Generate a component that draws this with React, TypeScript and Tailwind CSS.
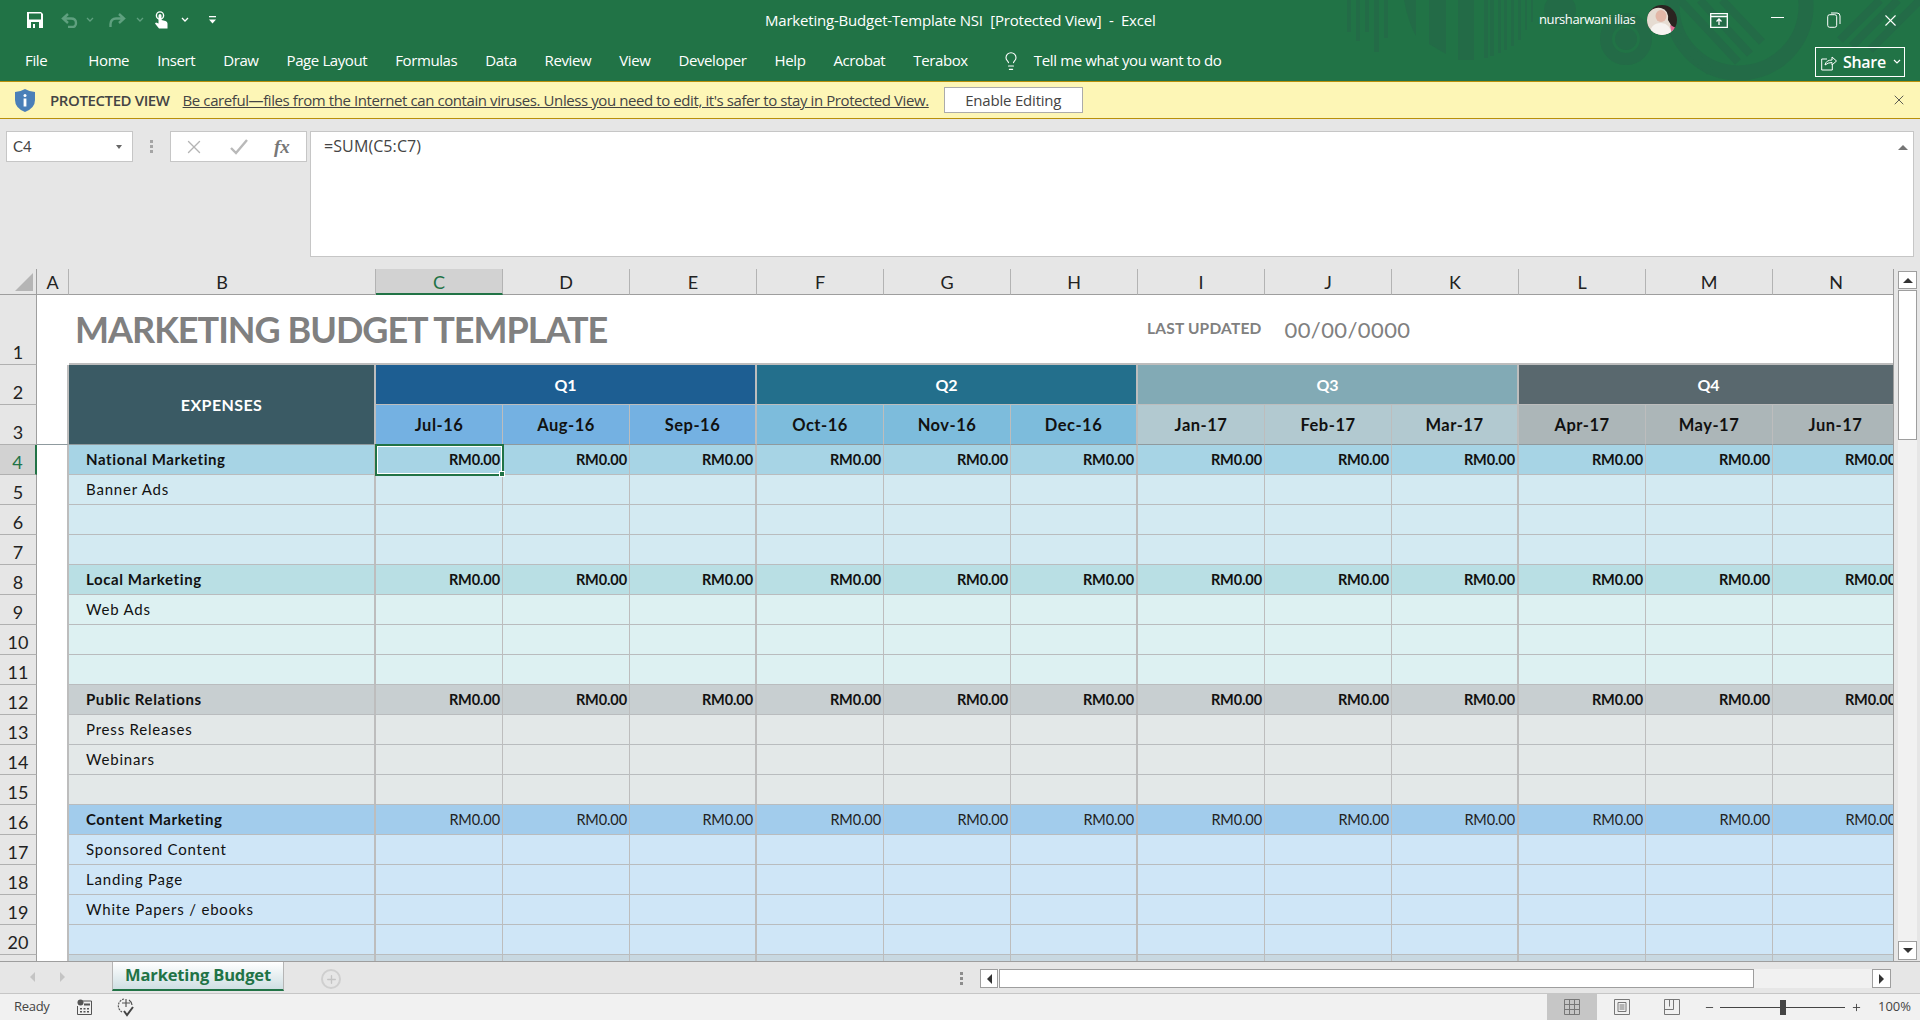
import { Lightbulb, Minus, Plus, X } from "lucide-react";

const UI_FONT = "font-['Open_Sans',sans-serif]";
const COL_LETTERS = ["C", "D", "E", "F", "G", "H", "I", "J", "K", "L", "M", "N"];
const RIBBON_TABS = ["Home", "Insert", "Draw", "Page Layout", "Formulas", "Data", "Review", "View", "Developer", "Help", "Acrobat", "Terabox"];

const QUARTERS = [
  { name: "Q1", bg: "bg-[#1d5e92]", text: "text-white" },
  { name: "Q2", bg: "bg-[#236f8c]", text: "text-white" },
  { name: "Q3", bg: "bg-[#82aab5]", text: "text-white" },
  { name: "Q4", bg: "bg-[#59686e]", text: "text-white" },
];

const MONTHS = [
  { label: "Jul-16", bg: "bg-[#74b1e2]" },
  { label: "Aug-16", bg: "bg-[#74b1e2]" },
  { label: "Sep-16", bg: "bg-[#74b1e2]" },
  { label: "Oct-16", bg: "bg-[#7dbcdc]" },
  { label: "Nov-16", bg: "bg-[#7dbcdc]" },
  { label: "Dec-16", bg: "bg-[#7dbcdc]" },
  { label: "Jan-17", bg: "bg-[#b2c9d0]" },
  { label: "Feb-17", bg: "bg-[#b2c9d0]" },
  { label: "Mar-17", bg: "bg-[#b2c9d0]" },
  { label: "Apr-17", bg: "bg-[#acb6b8]" },
  { label: "May-17", bg: "bg-[#acb6b8]" },
  { label: "Jun-17", bg: "bg-[#acb6b8]" },
];

type Row = { n: number; label?: string; bg: string; total?: boolean; thin?: boolean };

const ROWS: Row[] = [
  { n: 4, label: "National Marketing", bg: "bg-[#a7d4e5]", total: true },
  { n: 5, label: "Banner Ads", bg: "bg-[#d3eaf2]" },
  { n: 6, bg: "bg-[#d3eaf2]" },
  { n: 7, bg: "bg-[#d3eaf2]" },
  { n: 8, label: "Local Marketing", bg: "bg-[#b9dfe4]", total: true },
  { n: 9, label: "Web Ads", bg: "bg-[#ddf1f2]" },
  { n: 10, bg: "bg-[#ddf1f2]" },
  { n: 11, bg: "bg-[#ddf1f2]" },
  { n: 12, label: "Public Relations", bg: "bg-[#c8cfd1]", total: true },
  { n: 13, label: "Press Releases", bg: "bg-[#e3e8e8]" },
  { n: 14, label: "Webinars", bg: "bg-[#e3e8e8]" },
  { n: 15, bg: "bg-[#e3e8e8]" },
  { n: 16, label: "Content Marketing", bg: "bg-[#a2ccec]", total: true, thin: true },
  { n: 17, label: "Sponsored Content", bg: "bg-[#cfe6f7]" },
  { n: 18, label: "Landing Page", bg: "bg-[#cfe6f7]" },
  { n: 19, label: "White Papers / ebooks", bg: "bg-[#cfe6f7]" },
  { n: 20, bg: "bg-[#cfe6f7]" },
  { n: 21, bg: "bg-[#c8d8e1]" },
];

function TitlePattern() {
  const c = "#236b47";
  return (
    <svg className="absolute left-[1340px] top-0 w-[580px] h-[81px]" viewBox="1340 0 580 81">
      <g fill={c}>
        <rect x="1347" y="0" width="4" height="32" />
        <rect x="1356" y="0" width="4" height="41" />
        <rect x="1365" y="0" width="4" height="32" />
        <rect x="1374" y="0" width="5" height="52" />
        <rect x="1384" y="0" width="4" height="38" />
        <path d="M1404 0h12v36q-8-14-12-36z" />
        <path d="M1429 0h17v54l-17-10z" />
        <rect x="1458" y="0" width="16" height="60" />
        <rect x="1484" y="0" width="4" height="58" />
        <rect x="1490" y="0" width="4" height="56" />
        <rect x="1498" y="0" width="3" height="53" />
        <rect x="1504" y="0" width="3" height="50" />
        <rect x="1511" y="0" width="3" height="46" />
        <rect x="1518" y="0" width="3" height="40" />
        <rect x="1525" y="0" width="2" height="30" />
        <rect x="1531" y="0" width="2" height="22" />
        <circle cx="1560" cy="10" r="16" />
        <circle cx="1626" cy="39" r="11" />
      </g>
      <circle cx="1626" cy="39" r="20" fill="none" stroke={c} strokeWidth="12" />
      <circle cx="1739" cy="6" r="67" fill="none" stroke={c} strokeWidth="15" />
      <g stroke={c} strokeWidth="8">
        <path d="M1680 0l58 62M1700 0l50 54M1678 36l32 36M1722 0l40 42" />
        <path d="M1840 40l40-40M1852 46l46-46M1870 50l50-50" />
      </g>
    </svg>
  );
}

function Avatar() {
  return (
    <svg className="w-[30px] h-[30px] rounded-full" viewBox="0 0 30 30">
      <rect width="30" height="30" fill="#2b2320" />
      <path d="M0 30V10Q6 1 14 3q8 2 7 12 3 5 9 15z" fill="#e6dcd2" />
      <ellipse cx="14" cy="11" rx="5.5" ry="6" fill="#e2b7a7" />
      <path d="M3 30q0-12 11-12 9 0 11 12z" fill="#f6f3f0" />
      <path d="M23 20l6 3v7h-4z" fill="#e26c95" />
    </svg>
  );
}

function SaveIcon() {
  return (
    <svg className="w-4 h-4" viewBox="0 0 16 16">
      <path d="M0 0h14l2 2v14H0z" fill="#fff" />
      <rect x="2" y="1.5" width="12" height="6" fill="#217346" />
      <rect x="4" y="10" width="8" height="6" fill="#217346" />
      <rect x="6" y="12" width="2" height="4" fill="#fff" />
    </svg>
  );
}

function SmallChevron({ dim }: { dim?: boolean }) {
  return (
    <svg className="w-[8px] h-[6px]" viewBox="0 0 8 6">
      <path d="M1 1l3 3 3-3" fill="none" stroke={dim ? "#5fa07f" : "#fff"} strokeWidth="1.3" />
    </svg>
  );
}

function QuickAccess() {
  return (
    <div className="flex items-center h-10 pl-[27px]">
      <SaveIcon />
      <svg className="w-[18px] h-[15px] ml-[17px]" viewBox="0 0 18 15">
        <path d="M8 1L3 5.5 8 10M3 5.5h8q5 0 5 4.5t-5 4H8" fill="none" stroke="#5fa07f" strokeWidth="2.4" />
      </svg>
      <div className="ml-[8px]"><SmallChevron dim /></div>
      <svg className="w-[19px] h-[15px] ml-[14px]" viewBox="0 0 19 15">
        <path d="M11 1l5 4.5L11 10M16 5.5H8Q3 5.5 2.500 11V14" fill="none" stroke="#5fa07f" strokeWidth="2.4" />
      </svg>
      <div className="ml-[9px]"><SmallChevron dim /></div>
      <svg className="w-[14px] h-[18px] ml-[10px]" viewBox="0 0 14 18">
        <circle cx="6" cy="4.500" r="3.600" fill="none" stroke="#fff" strokeWidth="1.400" />
        <path d="M4.500 4.500q0-1.500 1.500-1.500t1.500 1.500v4.500l4 1q2 .5 2 2.500v5H5L1 12.500l1-1 2.500 1z" fill="#fff" />
      </svg>
      <div className="ml-[13px]"><SmallChevron /></div>
      <svg className="w-[7px] h-[8px] ml-[20px]" viewBox="0 0 7 8">
        <path d="M0 0h7v1.300H0z" fill="#fff" />
        <path d="M0 3.500h7L3.500 7.500z" fill="#fff" />
      </svg>
    </div>
  );
}

function WindowControls() {
  return (
    <div className="flex items-center h-10 text-white">
      <span className="text-[13px] tracking-[-0.4px] w-[97px] pr-[1px] text-right whitespace-nowrap">nursharwani ilias</span>
      <div className="ml-[11px]"><Avatar /></div>
      <svg className="w-[18px] h-[15px] ml-[33px]" viewBox="0 0 18 15">
        <path d="M.7.7h16.600v13.600H.7zM.7 3.500h16.600" fill="none" stroke="#fff" strokeWidth="1.300" />
        <path d="M9 12V6M6.500 8.500L9 6l2.500 2.500" fill="none" stroke="#fff" strokeWidth="1.300" />
      </svg>
      <div className="w-[13px] h-[1.500px] bg-white ml-[43px] mb-[5px]" />
      <svg className="w-[14px] h-[16px] ml-[43px]" viewBox="0 0 14 16">
        <path d="M.7 4.700a2 2 0 012-2h5a2 2 0 012 2v8.600a2 2 0 01-2 2h-5a2 2 0 01-2-2z" fill="none" stroke="#fff" />
        <path d="M4 1h6a3 3 0 013 3v8" fill="none" stroke="#fff" />
      </svg>
      <X className="w-[19px] h-[19px] ml-[40px]" strokeWidth={1.4} />
    </div>
  );
}

function RibbonTabs() {
  return (
    <div className="flex items-center h-[41px] pl-[25px] text-white text-[15px] tracking-[-0.35px] whitespace-nowrap">
      <span className="mr-[41px]">File</span>
      <div className="flex gap-[28px] tracking-[-0.4px]">
        {RIBBON_TABS.map((tab) => (
          <span key={tab}>{tab}</span>
        ))}
      </div>
      <Lightbulb className="w-5 h-5 ml-[33px]" strokeWidth={1.3} />
      <span className="ml-[13px]">Tell me what you want to do</span>
    </div>
  );
}

function ShareButton() {
  return (
    <div className="absolute left-[1815px] top-[47px] w-[90px] h-[30px] border border-white flex items-center pl-[5px] text-white">
      <svg className="w-[16px] h-[17px]" viewBox="0 0 16 17">
        <path d="M6 5H.7v11h10.600v-5" fill="none" stroke="#fff" />
        <path d="M4 11q1-5 7-5V3l4.500 4-4.500 4V8.500q-4 0-7 2.500z" fill="none" stroke="#fff" />
      </svg>
      <span className="ml-[6px] text-[16px] font-semibold tracking-[-0.3px]">Share</span>
      <svg className="w-[8px] h-[6px] ml-[7px]" viewBox="0 0 8 6">
        <path d="M1 1l3 3 3-3" fill="none" stroke="#fff" strokeWidth="1.200" />
      </svg>
    </div>
  );
}

function ProtectedBar() {
  return (
    <div className="h-[38px] flex items-center bg-[#fdf6b6] border-t border-b border-[#b8900a] pl-[15px] pr-[13px] text-[15px] text-[#444] whitespace-nowrap">
      <svg className="w-5 h-[23px]" viewBox="0 0 20 23">
        <path d="M10 0q5 3 10 3v8q0 8-10 12Q0 19 0 11V3q5 0 10-3z" fill="#4a7fb8" />
        <circle cx="10" cy="6.500" r="1.500" fill="#fff" />
        <rect x="8.600" y="9.500" width="2.800" height="8" fill="#fff" />
      </svg>
      <span className="ml-[15px] font-semibold tracking-[-0.4px]">PROTECTED VIEW</span>
      <span className="ml-[13px] underline tracking-[-0.41px]">Be careful—files from the Internet can contain viruses. Unless you need to edit, it's safer to stay in Protected View.</span>
      <div className="ml-[15px] w-[139px] h-[26px] bg-white border border-[#ababab] flex items-center justify-center tracking-[-0.2px]">Enable Editing</div>
      <X className="w-[16px] h-[16px] ml-auto text-[#444]" strokeWidth={1.3} />
    </div>
  );
}

function FormulaBar() {
  return (
    <div className="h-[150px] bg-[#e6e6e6] flex items-start pt-[12px] pl-[6px] pr-[6px] text-[14px] text-[#444]">
      <div className="w-[127px] h-[31px] bg-white border border-[#c6c6c6] flex items-center justify-between pl-[6px] pr-[10px] [font-family:'Lato',sans-serif] text-[15px]">
        C4
        <div className="w-0 h-0 border-x-[3.500px] border-x-transparent border-t-[4px] border-t-[#666]" />
      </div>
      <div className="w-[37px] h-[31px] flex flex-col items-center justify-center gap-[2px]">
        <div className="w-[3px] h-[3px] bg-[#a5a5a5]" />
        <div className="w-[3px] h-[3px] bg-[#a5a5a5]" />
        <div className="w-[3px] h-[3px] bg-[#a5a5a5]" />
      </div>
      <div className="w-[137px] h-[31px] bg-white border border-[#c6c6c6] flex items-center pl-[12px]">
        <X className="w-[22px] h-[22px] text-[#b4b4b4]" strokeWidth={1.5} />
        <svg className="w-[18px] h-[16px] ml-[25px]" viewBox="0 0 18 16">
          <path d="M1 9l5 5L17 1" fill="none" stroke="#b9b9b9" strokeWidth="2.400" />
        </svg>
        <span className="ml-[26px] font-['Liberation_Serif',serif] italic font-semibold text-[19px] text-[#777] leading-none">fx</span>
      </div>
      <div className="relative ml-[3px] flex-1 h-[126px] bg-white border border-[#c6c6c6] pl-[13px] pt-[2px] tracking-[0.1px] text-[16px]">
        =SUM(C5:C7)
        <div className="absolute right-[5px] top-[13px] w-0 h-0 border-x-[5px] border-x-transparent border-b-[5px] border-b-[#757575]" />
      </div>
    </div>
  );
}

const headCell = "border-r border-b border-r-[#b3b3b3] border-b-[#9e9e9e] bg-[#e6e6e6] flex items-center justify-center pt-[2px] text-[18px] text-[#222]";

function minor(i: number) {
  return i % 3 === 2 ? "border-r-2 border-r-[#bdbdbd]" : "border-r border-r-[#bdbdbd]";
}

function RowHead({ n, label }: { n: number; label?: boolean }) {
  const active = n === 4;
  return (
    <div
      className={`w-[37px] border-b border-b-[#b0b0b0] flex items-end justify-center text-[18px] leading-[24px] ${
        active ? "bg-[#d2d2d2] text-[#217346] border-r-2 border-r-[#217346]" : "bg-[#e6e6e6] text-[#222] border-r border-r-[#9e9e9e]"
      }`}
    >
      {label === false ? null : n}
    </div>
  );
}

function Sheet() {
  return (
    <div className="flex-1 min-w-0 overflow-hidden border-r border-r-[#9e9e9e] grid grid-cols-[37px_32px_307px_repeat(12,127px)] grid-rows-[26px_70px_40px_40px_repeat(18,30px)] [font-family:'Lato',sans-serif]">
      {/* Column letters */}
      <div className="bg-[#e6e6e6] border-b border-b-[#9e9e9e] border-r border-r-[#9e9e9e] flex items-end justify-end pr-[3px] pb-[3px]">
        <div className="w-0 h-0 border-l-[18px] border-l-transparent border-b-[18px] border-b-[#b5b5b5]" />
      </div>
      <div className={headCell}>A</div>
      <div className={headCell}>B</div>
      {COL_LETTERS.map((l) => (
        <div
          key={l}
          className={
            l === "C"
              ? "bg-[#d2d2d2] border-b-2 border-b-[#217346] border-r border-r-[#b3b3b3] flex items-center justify-center pt-[2px] text-[18px] text-[#217346]"
              : headCell
          }
        >
          {l}
        </div>
      ))}

      {/* Title row */}
      <RowHead n={1} />
      <div className="bg-white" />
      <div className="col-span-7 bg-white border-b-2 border-b-[#bdbdbd] flex items-center pl-[6px]">
        <span className="text-[36px] font-bold text-[#808080] tracking-[-1px] whitespace-nowrap">MARKETING BUDGET TEMPLATE</span>
      </div>
      <div className="col-span-6 bg-white border-b-2 border-b-[#bdbdbd] flex items-center pl-[9px] text-[#808080]">
        <span className="text-[15.500px] font-bold tracking-[0.2px] whitespace-nowrap">LAST UPDATED</span>
        <span className="ml-[23px] text-[22px] tracking-[0.4px]">00/00/0000</span>
      </div>

      {/* Quarter + month headers, B2:B3 is merged */}
      <RowHead n={2} />
      <div className="row-span-2 bg-white border-r-2 border-r-[#bdbdbd] border-b border-b-[#8f9a9e]" />
      <div className="row-span-2 bg-[#3a5a64] border-r-2 border-r-[#bdbdbd] border-b border-b-[#8f9a9e] flex items-center justify-center text-white font-bold text-[16px] tracking-[0.4px]">
        EXPENSES
      </div>
      {QUARTERS.map((q) => (
        <div key={q.name} className={`col-span-3 ${q.bg} ${q.text} border-r-2 border-r-[#bdbdbd] border-b border-b-[#bdbdbd] flex items-center justify-center font-bold text-[16px]`}>
          {q.name}
        </div>
      ))}
      <RowHead n={3} />
      {MONTHS.map((m, i) => (
        <div key={m.label} className={`${m.bg} ${minor(i)} flex items-center justify-center pt-[2px] font-bold text-[16.500px] tracking-[0.5px] text-[#111] border-b border-b-[#8f9a9e]`}>
          {m.label}
        </div>
      ))}

      {/* Budget rows */}
      {ROWS.map((r) => (
        <Line key={r.n} row={r} />
      ))}
    </div>
  );
}

function Line({ row }: { row: Row }) {
  const amount = row.total ? "RM0.00" : "";
  return (
    <>
      <RowHead n={row.n} label={row.n !== 21} />
      <div className="bg-white border-r-2 border-r-[#bdbdbd]" />
      <div className={`${row.bg} border-r-2 border-r-[#bdbdbd] border-b border-b-[#b9bcbe] flex items-center pl-[17px] text-[15px] text-[#111] ${row.total ? "font-bold tracking-[0.6px]" : "tracking-[0.8px]"}`}>
        {row.label}
      </div>
      {COL_LETTERS.map((l, i) => (
        <div
          key={l}
          className={`relative ${row.bg} ${minor(i)} border-b border-b-[#b9bcbe] flex items-center justify-end pr-[2px] text-[14.500px] tracking-[-0.1px] text-[#111] ${row.thin ? "text-[#222]" : "font-bold"}`}
        >
          {amount}
          {row.n === 4 && l === "C" && (
            <div className="absolute z-10 -left-[1px] -top-[1px] w-[129px] h-[32px] border-2 border-[#217346] outline outline-1 -outline-offset-3 outline-white">
              <div className="absolute -right-[3px] -bottom-[3px] w-[6px] h-[6px] bg-[#217346] border border-white" />
            </div>
          )}
        </div>
      ))}
    </>
  );
}

function VerticalScrollbar() {
  return (
    <div className="w-[26px] pl-[4px] pr-[3px] pt-[2px] pb-[1px] flex flex-col bg-[#e6e6e6]">
      <div className="h-[18px] bg-white border border-[#9e9e9e] flex items-center justify-center">
        <div className="w-0 h-0 border-x-[5px] border-x-transparent border-b-[5px] border-b-[#333]" />
      </div>
      <div className="h-[150px] mt-[1px] bg-white border border-[#9e9e9e]" />
      <div className="flex-1 bg-[#f1f1f1]" />
      <div className="h-[19px] bg-white border border-[#9e9e9e] flex items-center justify-center">
        <div className="w-0 h-0 border-x-[5px] border-x-transparent border-t-[5px] border-t-[#333]" />
      </div>
    </div>
  );
}

function TabBar() {
  return (
    <div className="h-[32px] bg-[#e6e6e6] border-t border-t-[#9e9e9e] flex items-start shrink-0">
      <div className="w-[112px] h-full flex items-center pl-[30px] pb-[2px] gap-[25px]">
        <div className="w-0 h-0 border-y-[5px] border-y-transparent border-r-[5px] border-r-[#c4c4c4]" />
        <div className="w-0 h-0 border-y-[5px] border-y-transparent border-l-[5px] border-l-[#c4c4c4]" />
      </div>
      <div className="w-[172px] h-[29px] bg-gradient-to-b from-white to-[#cfdfe3] border-x border-x-[#b5b5b5] border-b-2 border-b-[#217346] flex items-center justify-center font-bold text-[16.500px] text-[#217346] tracking-[-0.15px] whitespace-nowrap">
        Marketing Budget
      </div>
      <div className="ml-[37px] mt-[7px] w-[20px] h-[20px] rounded-full border-2 border-[#cfcfcf] flex items-center justify-center">
        <Plus className="w-[13px] h-[13px] text-[#c4c4c4]" strokeWidth={2.5} />
      </div>
      <div className="ml-[619px] mt-[10px] flex flex-col gap-[2px]">
        <div className="w-[3px] h-[3px] bg-[#8d8d8d]" />
        <div className="w-[3px] h-[3px] bg-[#8d8d8d]" />
        <div className="w-[3px] h-[3px] bg-[#8d8d8d]" />
      </div>
      <div className="ml-[17px] mt-[7px] flex w-[911px] h-[19px] bg-[#f1f1f1]">
        <div className="w-[18px] bg-white border border-[#9e9e9e] flex items-center justify-center">
          <div className="w-0 h-0 border-y-[5px] border-y-transparent border-r-[5px] border-r-[#333]" />
        </div>
        <div className="w-[755px] ml-[1px] bg-white border border-[#9e9e9e]" />
        <div className="flex-1" />
        <div className="w-[19px] bg-white border border-[#9e9e9e] flex items-center justify-center">
          <div className="w-0 h-0 border-y-[5px] border-y-transparent border-l-[5px] border-l-[#333]" />
        </div>
      </div>
    </div>
  );
}

function StatusBar() {
  return (
    <div className="flex-1 bg-[#f1f1f1] border-t border-t-[#c6c6c6] flex items-stretch text-[13px] text-[#444]">
      <div className="flex items-center pl-[14px]">
        <span className="w-[63px] tracking-[-0.3px]">Ready</span>
        <svg className="w-[15px] h-[16px]" viewBox="0 0 15 16">
          <circle cx="3.500" cy="3.500" r="3" fill="#555" />
          <path d="M6 2h8.500v13.500H.5V7" fill="none" stroke="#555" />
          <path d="M3 9h2v1.500H3zM6.500 9h2v1.500h-2zM10 9h2v1.500h-2zM3 12h2v1.500H3zM6.500 12h2v1.500h-2zM10 12h2v1.500h-2zM7 4.500h6V6.500H7z" fill="#555" />
        </svg>
        <svg className="w-[20px] h-[20px] ml-[24px]" viewBox="0 0 20 20">
          <path d="M8 2a7 7 0 00-2 13" fill="none" stroke="#555" strokeWidth="1.200" strokeDasharray="2 1" />
          <path d="M13 3a7 7 0 013 5M10 2v8M6 6h8" fill="none" stroke="#555" strokeWidth="1.200" />
          <path d="M8 14l3 4 6-8" fill="none" stroke="#444" strokeWidth="2" />
        </svg>
      </div>
      <div className="ml-auto flex items-stretch">
        <div className="w-[50px] bg-[#c6c6c6] flex items-center justify-center">
          <svg className="w-4 h-4" viewBox="0 0 16 16">
            <path d="M.5.5h15v15H.5zM.5 5.500h15M.5 10.500h15M5.500.5v15M10.500.5v15" fill="none" stroke="#777" />
          </svg>
        </div>
        <div className="w-[50px] flex items-center justify-center">
          <svg className="w-4 h-4" viewBox="0 0 16 16">
            <path d="M.5.5h15v15H.5z" fill="none" stroke="#777" />
            <path d="M4 3.500h8v9H4zM5.500 6h5M5.500 8h5M5.500 10h5" fill="none" stroke="#777" />
          </svg>
        </div>
        <div className="w-[50px] flex items-center justify-center">
          <svg className="w-4 h-4" viewBox="0 0 16 16">
            <path d="M.5.5h15v15H.5zM.5 10.500h9V.5M5.500.5v7" fill="none" stroke="#777" />
          </svg>
        </div>
        <div className="flex items-center pl-[7px] w-[223px]">
          <Minus className="w-[11px] h-[11px] text-[#444]" />
          <div className="relative ml-[5px] w-[125px] h-[1px] bg-[#444]">
            <div className="absolute left-[60px] -top-[7px] w-[6px] h-[15px] bg-[#444]" />
          </div>
          <Plus className="ml-[6px] w-[11px] h-[11px] text-[#444]" />
          <span className="ml-[16px]">100%</span>
        </div>
      </div>
    </div>
  );
}

export default function App() {
  return (
    <div className={`w-[1920px] h-[1020px] overflow-hidden flex flex-col ${UI_FONT}`}>
      {/* Title + ribbon tabs */}
      <header className="relative h-[81px] shrink-0 bg-[#217346]">
        <TitlePattern />
        <div className="relative flex h-10">
          <QuickAccess />
          <div className="absolute left-[765px] top-0 h-10 flex items-center text-white text-[15px] tracking-[-0.2px] whitespace-pre">
            Marketing-Budget-Template NSI  [Protected View]  -  Excel
          </div>
          <div className="ml-auto pr-[20px]">
            <WindowControls />
          </div>
        </div>
        <RibbonTabs />
        <ShareButton />
      </header>
      <ProtectedBar />
      <FormulaBar />
      <div className="h-[692px] shrink-0 flex bg-[#e6e6e6]">
        <Sheet />
        <VerticalScrollbar />
      </div>
      <TabBar />
      <StatusBar />
    </div>
  );
}
